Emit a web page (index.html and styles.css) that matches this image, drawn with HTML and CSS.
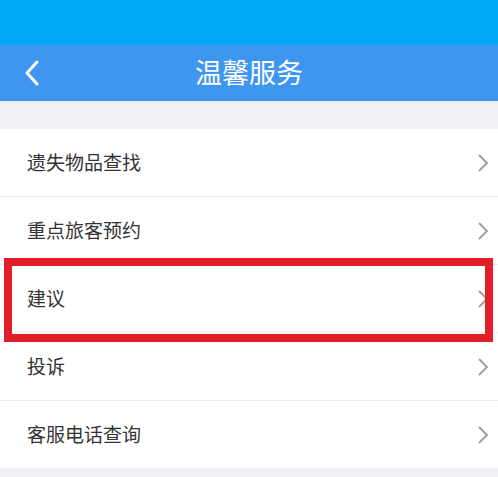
FILE: index.html
```html
<!DOCTYPE html>
<html lang="zh-CN">
<head>
<meta charset="utf-8">
<link rel="stylesheet" href="styles.css">
</head>
<body>
<div class="status"></div>
<div class="nav">
  <div class="back">
    <svg width="16" height="26" viewBox="0 0 16 26"><path d="M13 2 L3 13 L13 24" fill="none" stroke="#fff" stroke-width="3" stroke-linecap="round" stroke-linejoin="round"/></svg>
  </div>
  <div class="title">温馨服务</div>
  <div></div>
</div>
<div class="gap"></div>
<div class="list">
  <div class="row"><span>遗失物品查找</span><svg class="chev" width="12" height="20" viewBox="0 0 12 20"><path d="M2 2 L10 10 L2 18" fill="none" stroke="#a0a0a0" stroke-width="2"/></svg></div>
  <div class="row"><span>重点旅客预约</span><svg class="chev" width="12" height="20" viewBox="0 0 12 20"><path d="M2 2 L10 10 L2 18" fill="none" stroke="#a0a0a0" stroke-width="2"/></svg></div>
  <div class="row"><span>建议</span><svg class="chev" width="12" height="20" viewBox="0 0 12 20"><path d="M2 2 L10 10 L2 18" fill="none" stroke="#a0a0a0" stroke-width="2"/></svg></div>
  <div class="row"><span>投诉</span><svg class="chev" width="12" height="20" viewBox="0 0 12 20"><path d="M2 2 L10 10 L2 18" fill="none" stroke="#a0a0a0" stroke-width="2"/></svg></div>
  <div class="row"><span>客服电话查询</span><svg class="chev" width="12" height="20" viewBox="0 0 12 20"><path d="M2 2 L10 10 L2 18" fill="none" stroke="#a0a0a0" stroke-width="2"/></svg></div>
</div>
<div class="highlight"></div>
</body>
</html>
```
FILE: styles.css
```css
html, body {
  margin: 0;
  padding: 0;
}
body {
  background: #f0eff4;
  font-family: "Noto Sans CJK SC", "Noto Sans", sans-serif;
  position: relative;
  width: 498px;
  height: 477px;
  overflow: hidden;
}
.status {
  height: 45px;
  background: #03a9f4;
}
.nav {
  height: 56px;
  background: #3e96f1;
  display: grid;
  grid-template-columns: 1fr auto 1fr;
  align-items: center;
}
.back {
  padding-left: 24px;
  display: flex;
  align-items: center;
}
.title {
  color: #fff;
  font-size: 27px;
  line-height: 1;
  padding-bottom: 4px;
}
.gap {
  height: 28px;
}
.list {
  background: #fff;
}
.row {
  height: 67px;
  border-bottom: 1px solid #ececec;
  display: flex;
  align-items: center;
  justify-content: space-between;
  padding: 0 9px 0 27px;
  font-size: 19px;
  color: #333;
}
.row:last-child {
  border-bottom: none;
}
.row span {
  padding-bottom: 2px;
}
.highlight {
  position: absolute;
  left: 4px;
  top: 258px;
  width: 489px;
  height: 84px;
  box-sizing: border-box;
  border: 8px solid #e31e2a;
}
```
